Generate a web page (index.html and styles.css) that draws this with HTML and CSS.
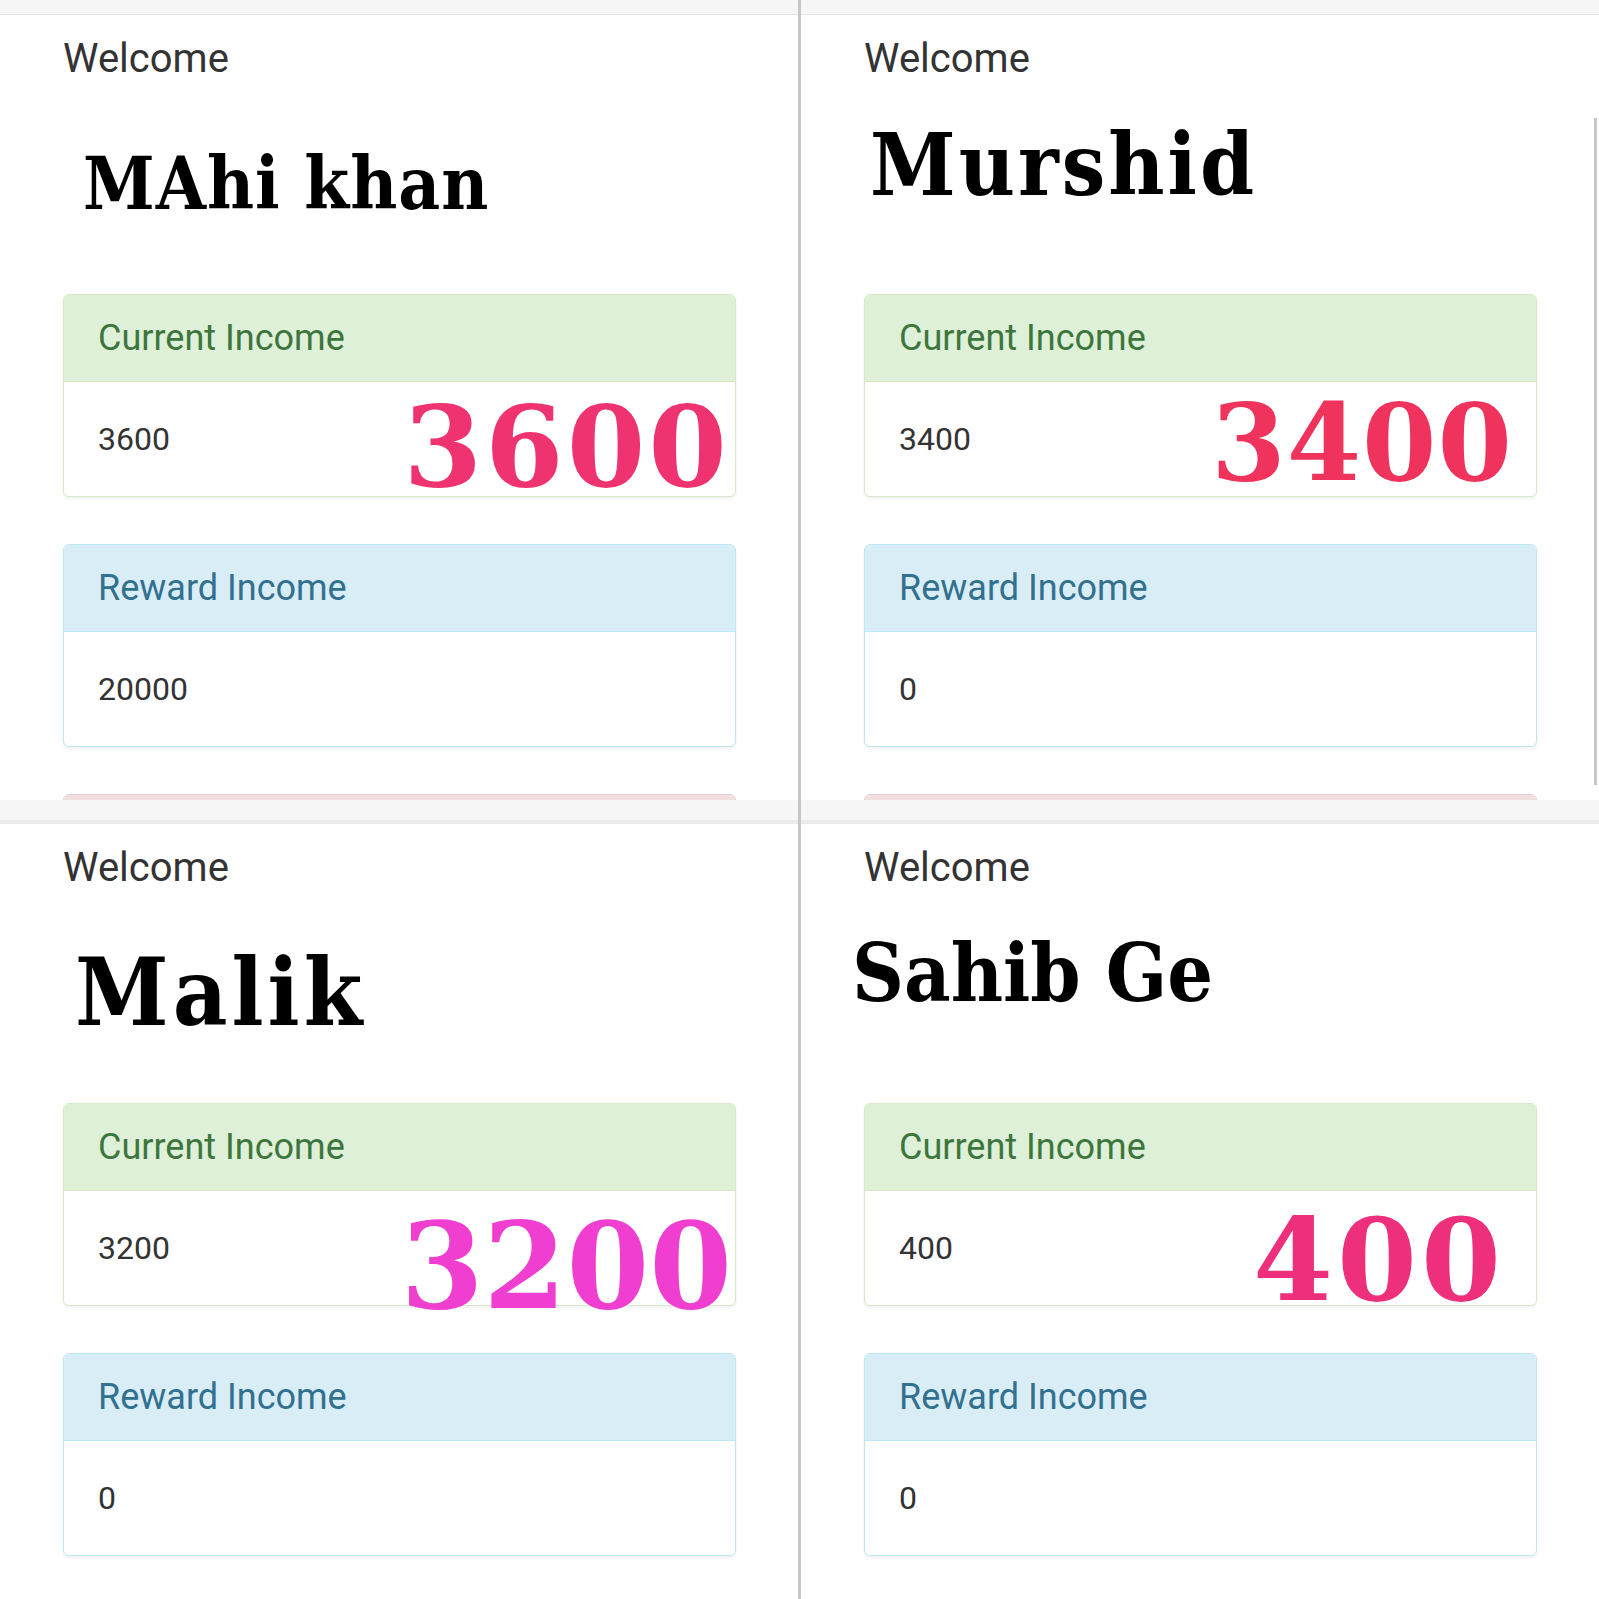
FILE: index.html
```html
<!DOCTYPE html>
<html lang="en">
<head>
    <meta charset="UTF-8">
    <meta name="viewport" content="width=device-width, initial-scale=1.0">
    <title>Income Dashboard</title>
    <link rel="stylesheet" href="styles.css">
</head>
<body>
    <div class="collage">
        <!-- top left -->
        <div class="screen top">
            <div class="topbar"></div>
            <div class="content">
                <div class="intro">
                    <p class="welcome">Welcome</p>
                    <h1 class="name mahi">MAhi khan</h1>
                </div>
                <div class="panel success">
                    <div class="panel-heading">Current Income</div>
                    <div class="panel-body">3600</div>
                    <span class="stamp s3600">3600</span>
                </div>
                <div class="panel info">
                    <div class="panel-heading">Reward Income</div>
                    <div class="panel-body">20000</div>
                </div>
                <div class="panel danger">
                    <div class="panel-heading"></div>
                </div>
            </div>
        </div>

        <!-- top right -->
        <div class="screen top">
            <div class="topbar"></div>
            <div class="content">
                <div class="intro">
                    <p class="welcome">Welcome</p>
                    <h1 class="name murshid">Murshid</h1>
                </div>
                <div class="panel success">
                    <div class="panel-heading">Current Income</div>
                    <div class="panel-body">3400</div>
                    <span class="stamp s3400">3400</span>
                </div>
                <div class="panel info">
                    <div class="panel-heading">Reward Income</div>
                    <div class="panel-body">0</div>
                </div>
                <div class="panel danger">
                    <div class="panel-heading"></div>
                </div>
            </div>
            <div class="scroll-edge"></div>
        </div>

        <!-- bottom left -->
        <div class="screen bottom">
            <div class="topbar"></div>
            <div class="content">
                <div class="intro">
                    <p class="welcome">Welcome</p>
                    <h1 class="name malik">Malik</h1>
                </div>
                <div class="panel success">
                    <div class="panel-heading">Current Income</div>
                    <div class="panel-body">3200</div>
                    <span class="stamp s3200">3200</span>
                </div>
                <div class="panel info">
                    <div class="panel-heading">Reward Income</div>
                    <div class="panel-body">0</div>
                </div>
            </div>
        </div>

        <!-- bottom right -->
        <div class="screen bottom">
            <div class="topbar"></div>
            <div class="content">
                <div class="intro">
                    <p class="welcome">Welcome</p>
                    <h1 class="name sahib">Sahib Ge</h1>
                </div>
                <div class="panel success">
                    <div class="panel-heading">Current Income</div>
                    <div class="panel-body">400</div>
                    <span class="stamp s400">400</span>
                </div>
                <div class="panel info">
                    <div class="panel-heading">Reward Income</div>
                    <div class="panel-body">0</div>
                </div>
            </div>
        </div>
    </div>
</body>
</html>
```

FILE: styles.css
```css
body {
    margin: 0;
    padding: 0;
    font-family: Roboto, "Liberation Sans", Arial, sans-serif;
    background-color: #fff;
}

.collage {
    display: grid;
    grid-template-columns: 1fr 1fr;
    grid-template-rows: 800px 799px;
    column-gap: 3px;
    width: 1599px;
    height: 1599px;
    background-color: #c6c6c6;
}

.screen {
    position: relative;
    overflow: hidden;
    background-color: #fff;
}

.topbar {
    background-color: #f6f6f6;
    border-bottom: 1px solid #e4e4e4;
    height: 14px;
}

.bottom .topbar {
    height: 20px;
    border-bottom: 4px solid #ebebeb;
}

.content {
    padding: 0 62px 0 63px;
}

.intro {
    height: 279px;
    padding-top: 20px;
    box-sizing: border-box;
}

.welcome {
    margin: 0;
    font-size: 40px;
    line-height: 48px;
    color: #333;
}

.name {
    margin: 0;
    font-family: "DejaVu Serif Condensed", "DejaVu Serif", "Liberation Serif", serif;
    font-stretch: condensed;
    font-weight: bold;
    line-height: 1;
    color: #000;
    white-space: nowrap;
}

.name.mahi {
    font-size: 72px;
    letter-spacing: 1px;
    margin-top: 65px;
    margin-left: 20px;
}

.name.murshid {
    font-size: 86px;
    letter-spacing: 3px;
    margin-top: 39px;
    margin-left: 6px;
}

.name.malik {
    font-size: 94px;
    letter-spacing: 4px;
    margin-top: 53px;
    margin-left: 12px;
}

.name.sahib {
    font-size: 80px;
    margin-top: 41px;
    margin-left: -12px;
}

.panel {
    position: relative;
    border: 1px solid #ddd;
    border-radius: 6px;
    box-shadow: 0 2px 3px rgba(0, 0, 0, 0.06);
    margin-bottom: 47px;
    background-color: #fff;
}

.panel-heading {
    display: flex;
    align-items: center;
    height: 86px;
    padding: 0 34px;
    font-size: 36px;
    border-bottom: 1px solid transparent;
    border-radius: 5px 5px 0 0;
}

.panel-body {
    display: flex;
    align-items: center;
    height: 114px;
    padding: 0 34px;
    font-size: 32px;
    color: #333;
}

.success {
    border-color: #d6e9c6;
}

.success .panel-heading {
    background-color: #dff0d8;
    border-bottom-color: #d6e9c6;
    color: #3c763d;
}

.info {
    border-color: #bce8f1;
}

.info .panel-heading {
    background-color: #d9edf7;
    border-bottom-color: #bce8f1;
    color: #31708f;
}

.danger {
    border-color: #ebccd1;
}

.danger .panel-heading {
    background-color: #f2dede;
    border-bottom-color: #ebccd1;
}

/* big numbers pasted over the income card */
.stamp {
    position: absolute;
    font-family: "DejaVu Serif", "Liberation Serif", serif;
    font-weight: bold;
    line-height: 1;
    white-space: nowrap;
}

.s3600 {
    font-size: 113px;
    letter-spacing: 3px;
    right: 5px;
    bottom: -7px;
    color: #ef3270;
}

.s3400 {
    font-size: 107px;
    letter-spacing: 1px;
    right: 23px;
    bottom: 0;
    color: #f0335c;
}

.s3200 {
    font-size: 119px;
    right: 3px;
    bottom: -21px;
    color: #f03ed0;
}

.s400 {
    font-size: 115px;
    letter-spacing: 4px;
    right: 31px;
    bottom: -12px;
    color: #ee2f7c;
}

.scroll-edge {
    position: absolute;
    right: 2px;
    top: 118px;
    width: 3px;
    height: 667px;
    background-color: #c8c8c8;
}
```
